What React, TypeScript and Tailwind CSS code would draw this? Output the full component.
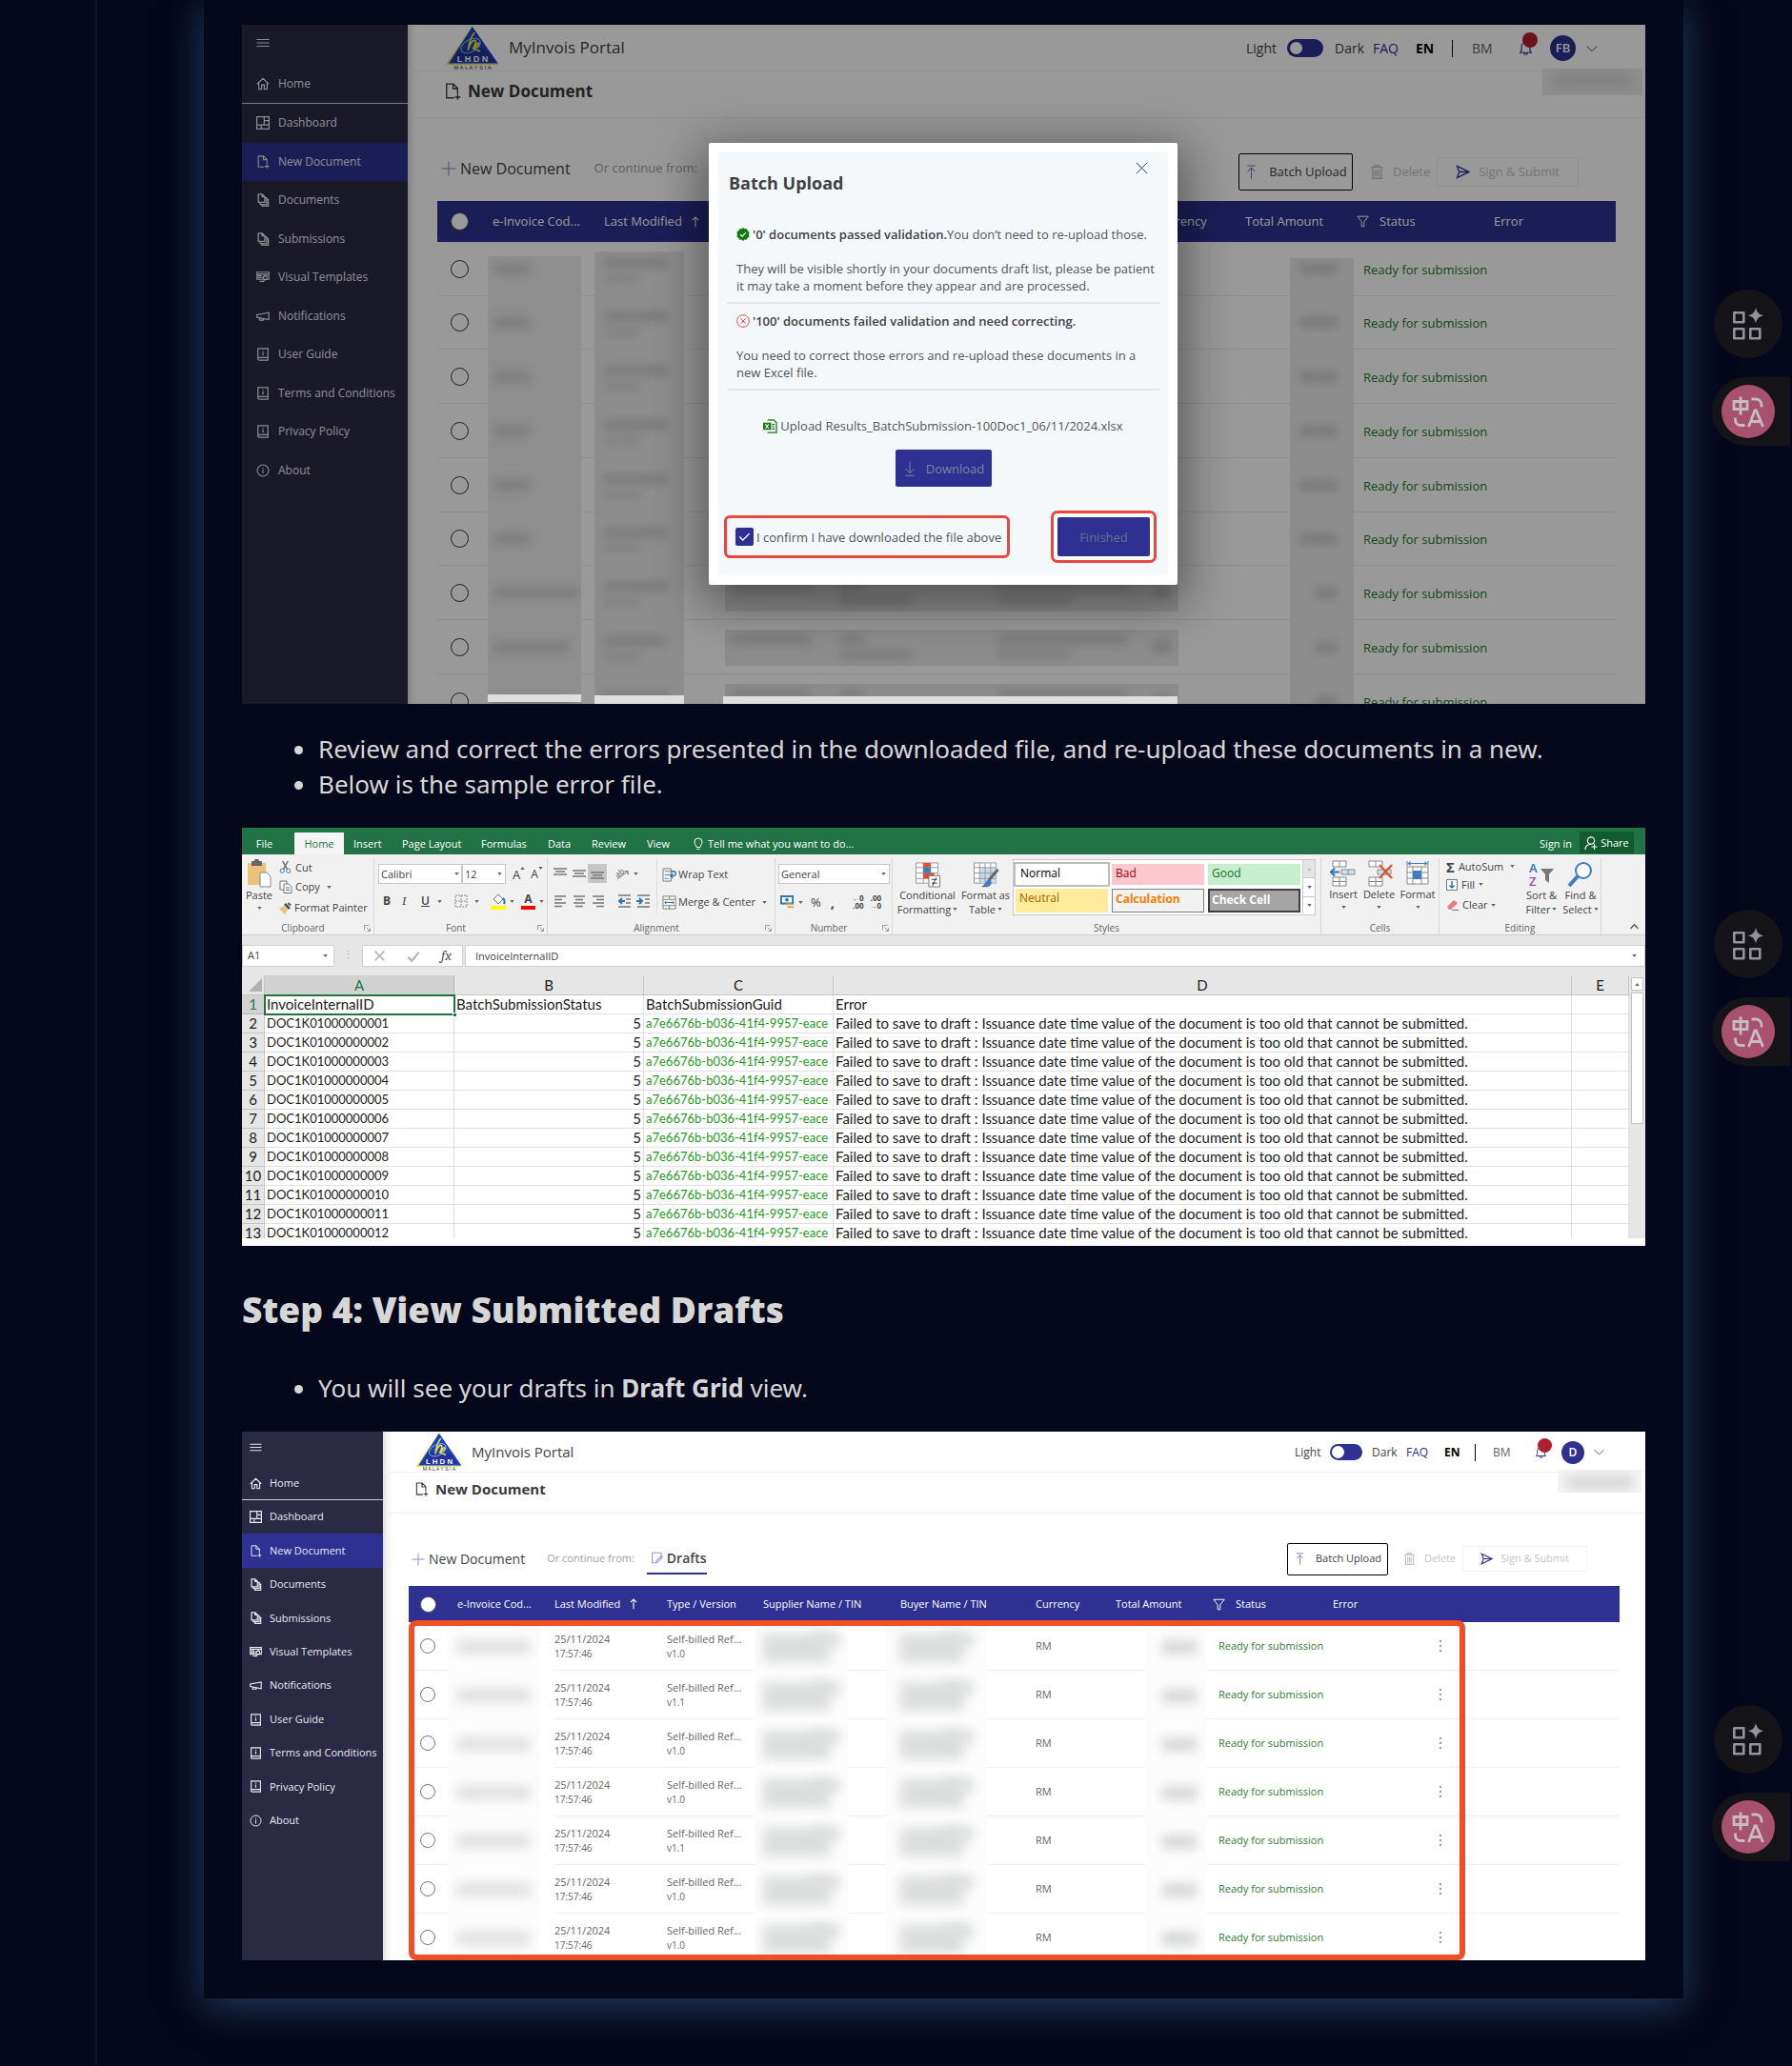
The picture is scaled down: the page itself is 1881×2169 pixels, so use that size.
import React from "react";

type P = { className?: string };

/* ---------- shared line icons ---------- */

function Ico({ className, children, w = 1.2 }: P & { children: React.ReactNode; w?: number }) {
  return (
    <svg viewBox="0 0 16 16" fill="none" stroke="currentColor" strokeWidth={w} className={className} aria-hidden="true">
      {children}
    </svg>
  );
}

const MenuIcon = ({ className }: P) => <Ico className={className}><path d="M0.5 4h15M0.5 8h15M0.5 12h15" /></Ico>;
const HomeIcon = ({ className }: P) => <Ico className={className} w={1.4}><path d="M1 8.3 8 1.6l7 6.7M3 7v7.5h3.4V9.4h3.2v5.1H13V7" /></Ico>;
const DashIcon = ({ className }: P) => <Ico className={className} w={1.4}><path d="M.7.7h14.6v14.6H.7zM9.5.7v9.6M.7 10.3h14.6M9.5 5.3h5.8M6 10.3v5" /></Ico>;
const NewDocIcon = ({ className }: P) => <Ico className={className}><path d="M9.5 14H2.5V1h6.2l4 4v5.5M8.5 1v4.3h4.2M12.8 10.8v5M10.3 13.3h5" /></Ico>;
const DocsIcon = ({ className }: P) => (
  <Ico className={className} w={1.5}><path d="M2.5 1h4.700l3 3v6.800H2.500zM7 1v3.200h3.200M4.800 11v2.200h7.600V5.400h-1.800M7 13.400v2h7.400V7.600h-1.800" /></Ico>
);
const VisualIcon = ({ className }: P) => (
  <Ico className={className} w={1.3}>
    <path d="M.8 2h14.4v8.6H.8zM.8 4.4h14.4M2.6 6.2h3v2.6h-3zM7 8.6l5.5-3M4 13h5" />
    <circle cx="10.8" cy="8.6" r="2.4" /><path d="M8 14l2-3" />
  </Ico>
);
const NotifIcon = ({ className }: P) => <Ico className={className} w={1.4}><path d="M.8 6.2v3.2L15 12V3.6zM4 10v2.6h4.4v-1.8" /></Ico>;
const GuideIcon = ({ className }: P) => <Ico className={className} w={1.4}><path d="M2 1h12v14H3.6A1.6 1.6 0 0 1 2 13.4zM2 13.2c0-.8.7-1.3 1.5-1.3H14M8 3.2v1.2M8 5.4v4" /></Ico>;
const AboutIcon = ({ className }: P) => <Ico className={className}><circle cx="8" cy="8" r="6.8" /><path d="M8 4.2v1.4M8 6.8v5" /></Ico>;
const PlusIcon = ({ className }: P) => <Ico className={className} w={1}><path d="M8 .5v15M.5 8h15" /></Ico>;
const UploadIcon = ({ className }: P) => <Ico className={className} w={1.1}><path d="M3.5 1h9M8 15.5V3.4M4 7.4l4-4 4 4" /></Ico>;
const DownIcon = ({ className }: P) => <Ico className={className} w={1}><path d="M3.5 15.3h9M8 .5v12M3.6 8.2 8 12.6l4.4-4.4" /></Ico>;
const TrashIcon = ({ className }: P) => <Ico className={className} w={1.5}><path d="M1.5 2.8h13M5.5 2.6V.8h5v1.8M3 3v12.2h10V3M5.8 5.5v7.3M8 5.5v7.3M10.2 5.5v7.3" /></Ico>;
const SendIcon = ({ className }: P) => <Ico className={className} w={1.4}><path d="M1.5 1.5 14.8 8 1.5 14.5 4 8zM4 8h10" /></Ico>;
const FilterIcon = ({ className }: P) => <Ico className={className} w={1.2}><path d="M1 1.5h14L9.6 8.4v6.1H6.4V8.4z" /></Ico>;
const ArrowUpIcon = ({ className }: P) => <Ico className={className} w={1.4}><path d="M8 15V1.5M3.8 5.6 8 1.4l4.2 4.2" /></Ico>;
const ChevronIcon = ({ className }: P) => <Ico className={className} w={1.2}><path d="M.8 4.5 8 11.7l7.2-7.2" /></Ico>;
const BellIcon = ({ className }: P) => <Ico className={className} w={1.2}><path d="M1.8 13h12.4l-1.5-2.2V6.4a4.7 4.7 0 0 0-9.4 0v4.4zM6 13.2a2 2 0 0 0 4 0" /></Ico>;
const DraftIcon = ({ className }: P) => <Ico className={className} w={1.4}><path d="M13.5 6V1.5H2v13h4.5M7 14.5l.8-3 6.6-6 1 1.2-6 6.6z" /></Ico>;

function LhdnLogo({ className }: P) {
  return (
    <svg viewBox="0 0 58 46" className={className} role="img" aria-label="LHDN Malaysia">
      <path d="M28.5.5 1 41h55z" fill="#e9e537" />
      <path d="M28.8 1 4 39.6h51.8z" fill="#1b3fc8" />
      <path d="M16 24 8.5 37.500h43L43 25z" fill="#23329b" />
      <path d="M31 7c-3 4-6 12-6.600 19M25 23c2-6 5.500-9 7-7 1.400 2-1.500 6-2.500 9 2-4 6-9 6.500-6 .2 2-6 5-6 5l7 3" fill="none" stroke="#e9e537" strokeWidth="1.800" />
      <ellipse cx="27" cy="21" rx="11" ry="6.500" fill="none" stroke="#8fb3dc" strokeWidth="1" transform="rotate(-28 27 21)" />
      <text x="29" y="37.500" textAnchor="middle" fontSize="9" fontWeight="700" fill="#fff" fontFamily="Liberation Sans, sans-serif">L H D N</text>
      <text x="29" y="45.500" textAnchor="middle" fontSize="6" fill="#333" fontFamily="Liberation Sans, sans-serif">M A L A Y S I A</text>
    </svg>
  );
}

/* ---------- portal ---------- */

const navItems: [string, (p: P) => React.ReactElement][] = [
  ["Dashboard", DashIcon],
  ["New Document", NewDocIcon],
  ["Documents", DocsIcon],
  ["Submissions", DocsIcon],
  ["Visual Templates", VisualIcon],
  ["Notifications", NotifIcon],
  ["User Guide", GuideIcon],
  ["Terms and Conditions", GuideIcon],
  ["Privacy Policy", GuideIcon],
  ["About", AboutIcon],
];

const large = {
  frame: "h-[713px]",
  aside: "w-[174px] text-[12px]",
  menu: "h-[38px] pl-[15px]",
  home: "h-[45px] pt-[4px] pl-[15px] gap-[9px]",
  nav: "h-[405px]",
  item: "pl-[15px] gap-[9px]",
  icon: "size-[14px]",
  top: "h-[49px] pl-[39px] pr-[50px] text-[14px]",
  logo: "w-[58px] h-[46px]",
  brand: "ml-[9px] text-[17px]",
  light: "w-[43px]",
  toggle: "w-[38px] h-[19px] mr-[12px] p-[3px]",
  knob: "size-[13px]",
  dark: "w-[40px]",
  faq: "w-[45px]",
  en: "w-[38px]",
  bar: "w-[21px]",
  bm: "w-[49px]",
  bell: "w-[33px]",
  bellIcon: "size-[15px]",
  dot: "size-[16px] left-[4px] -top-[9px]",
  avatar: "size-[27px] text-[13px] mr-[11px]",
  chev: "size-[12px]",
  sub: "h-[49px] pl-[38px] pb-[6px] text-[17px] gap-[7px]",
  subIcon: "size-[18px]",
  redactTop: "right-[3px] top-[46px] w-[105px] h-[28px] bg-[#ededed]",
  bar2: "h-[87px] pt-[26px] pl-[35px] pr-[70px]",
  newDoc: "text-[16px] pb-[7px]",
  cont: "text-[13px] ml-[25px] pb-[7px]",
  plus: "size-[16px] mr-[4px]",
  batch: "w-[120px] h-[39px] gap-[11px] mr-[18px] text-[13px]",
  del: "gap-[9px] w-[70px] text-[13px]",
  sign: "w-[149px] h-[31px] gap-[9px] text-[13px]",
  tIcon: "size-[15px]",
  wrap: "mx-[31px]",
  head: "h-[43px] text-[13px]",
  radio: "size-[19px] ml-[14px]",
};

const small: typeof large = {
  frame: "h-[555px]",
  aside: "w-[148px] text-[11px]",
  menu: "h-[33px] pl-[8px]",
  home: "h-[39px] pt-[4px] pl-[8px] gap-[8px]",
  nav: "h-[354px]",
  item: "pl-[8px] gap-[8px]",
  icon: "size-[13px]",
  top: "h-[43px] pl-[33px] pr-[43px] text-[12px]",
  logo: "w-[52px] h-[40px]",
  brand: "ml-[8px] text-[15px]",
  light: "w-[37px]",
  toggle: "w-[34px] h-[17px] mr-[10px] p-[2px]",
  knob: "size-[13px]",
  dark: "w-[36px]",
  faq: "w-[40px]",
  en: "w-[32px]",
  bar: "w-[19px]",
  bm: "w-[44px]",
  bell: "w-[28px]",
  bellIcon: "size-[13px]",
  dot: "size-[15px] left-[3px] -top-[8px]",
  avatar: "size-[24px] text-[12px] mr-[10px]",
  chev: "size-[11px]",
  sub: "h-[43px] pl-[33px] pb-[7px] text-[15px] gap-[7px]",
  subIcon: "size-[15px]",
  redactTop: "right-[4px] top-[40px] w-[88px] h-[24px] bg-[#f4f4f4]",
  bar2: "h-[76px] pt-[19px] pl-[30px] pr-[61px]",
  newDoc: "text-[14px]",
  cont: "text-[11px] ml-[23px]",
  plus: "size-[14px] mr-[4px]",
  batch: "w-[106px] h-[34px] gap-[10px] mr-[16px] text-[11px]",
  del: "gap-[9px] w-[62px] text-[11px]",
  sign: "w-[131px] h-[27px] gap-[8px] text-[11px]",
  tIcon: "size-[13px]",
  wrap: "mx-[27px]",
  head: "h-[38px] text-[11px]",
  radio: "size-[17px] ml-[12px]",
};

function Portal({
  s,
  initials,
  drafts,
  children,
  table,
  label,
}: {
  s: typeof large;
  initials: string;
  drafts?: boolean;
  children?: React.ReactNode;
  table: React.ReactNode;
  label: string;
}) {
  return (
    <section aria-label={label} className={`relative flex overflow-hidden bg-white text-[#444] ${s.frame}`}>
      <aside className={`shrink-0 bg-[#2b2a44] text-[#e9e9f0] ${s.aside}`}>
        <div className={`flex items-center ${s.menu}`}>
          <button aria-label="Menu"><MenuIcon className={s.icon} /></button>
        </div>
        <a href="#home" className={`flex items-center border-b border-[#c9ccd8] ${s.home}`}>
          <HomeIcon className={s.icon} />Home
        </a>
        <nav className={`grid auto-rows-fr ${s.nav}`}>
          {navItems.map(([name, I]) => (
            <a key={name} href="#nav" className={`flex items-center whitespace-nowrap ${s.item} ${name === "New Document" ? "bg-[#2e3192]" : ""}`}>
              <I className={`shrink-0 ${s.icon}`} />{name}
            </a>
          ))}
        </nav>
      </aside>

      <div className="relative min-w-0 flex-1 shadow-[inset_10px_0_10px_-8px_rgba(0,0,0,0.18)]">
        <header className={`flex items-center border-b border-[#f0f0f0] ${s.top}`}>
          <LhdnLogo className={s.logo} />
          <span className={s.brand}>MyInvois Portal</span>
          <div className="ml-auto flex items-center whitespace-nowrap pt-px">
            <span className={s.light}>Light</span>
            <button role="switch" aria-checked="false" aria-label="Dark mode" className={`rounded-full bg-[#2e3192] ${s.toggle}`}>
              <span className={`block rounded-full bg-white ${s.knob}`} />
            </button>
            <span className={s.dark}>Dark</span>
            <a href="#faq" className={`text-[#2e3192] ${s.faq}`}>FAQ</a>
            <a href="#en" className={`font-bold text-black ${s.en}`}>EN</a>
            <span className={s.bar}><span className="block h-[18px] w-px bg-black" /></span>
            <a href="#bm" className={`text-[#666] ${s.bm}`}>BM</a>
            <button aria-label="Alerts" className={`relative block text-[#2e3192] ${s.bell}`}>
              <BellIcon className={s.bellIcon} />
              <span className={`absolute rounded-full bg-[#b01f2e] ${s.dot}`} />
            </button>
            <span className={`flex items-center justify-center rounded-full bg-[#2e3192] font-semibold text-white ${s.avatar}`}>{initials}</span>
            <ChevronIcon className={s.chev} />
          </div>
        </header>
        <div className={`flex items-center border-b border-[#efefef] font-bold text-[#3a3a3a] ${s.sub}`}>
          <NewDocIcon className={s.subIcon} />New Document
        </div>
        <div className={`absolute overflow-hidden ${s.redactTop}`}>
          <div className="mx-[10px] mt-[6px] h-[14px] bg-[#d6d6d6] blur-[6px]" />
        </div>

        <div className={`flex items-center whitespace-nowrap ${s.bar2}`}>
          <button className={`flex items-center ${s.newDoc}`}>
            <PlusIcon className={`text-[#7f82cc] ${s.plus}`} />New Document
          </button>
          <span className={`text-[#a0a0a0] ${s.cont}`}>Or continue from:</span>
          {drafts && (
            <button className="ml-[13px] flex h-[32px] items-center gap-[4px] border-b-2 border-[#2e3192] pl-[4px] text-[14px] font-semibold">
              <DraftIcon className="size-[13px] text-[#9a9cd8]" />Drafts
            </button>
          )}
          <button className={`ml-auto flex items-center justify-center rounded-[2px] border border-black ${s.batch}`}>
            <UploadIcon className={`text-[#7477b8] ${s.tIcon}`} />Batch Upload
          </button>
          <button className={`flex items-center text-[#c4c4c4] ${s.del}`}>
            <TrashIcon className={s.tIcon} />Delete
          </button>
          <button className={`flex items-center justify-center border border-[#f1f1f1] text-[#c4c4c4] ${s.sign}`}>
            <SendIcon className={`text-[#2e3192] ${s.tIcon}`} />Sign &amp; Submit
          </button>
        </div>
        <div className={s.wrap}>{table}</div>
      </div>
      {children}
    </section>
  );
}

function HeadRow({ s, trail }: { s: typeof large; trail?: boolean }) {
  return (
    <thead>
      <tr className={`bg-[#2e3192] text-left text-white ${s.head}`}>
        <th><input type="radio" aria-label="Select all" className={`block appearance-none rounded-full border border-[#555] bg-white ${s.radio}`} /></th>
        <th className="font-normal">e-Invoice Cod...</th>
        <th className="font-normal"><span className="flex items-center gap-[8px]">Last Modified <ArrowUpIcon className="size-[12px]" /></span></th>
        <th className="font-normal">Type / Version</th>
        <th className="font-normal">Supplier Name / TIN</th>
        <th className="font-normal">Buyer Name / TIN</th>
        <th className="font-normal">Currency</th>
        <th className="font-normal">Total Amount</th>
        <th className="font-normal"><span className="flex items-center gap-[11px]"><FilterIcon className="size-[13px]" />Status</span></th>
        <th className="font-normal">Error</th>
        {trail && <th aria-label="Actions" />}
      </tr>
    </thead>
  );
}

const bigRows = ["h-[57px]", "h-[56px]", "h-[57px]", "h-[57px]", "h-[57px]", "h-[56px]", "h-[57px]", "h-[57px]", "h-[57px]"];

function BatchTable() {
  const line = "border-b border-[#ececec]";
  return (
    <table className="w-full table-fixed border-separate border-spacing-0 whitespace-nowrap">
      <colgroup>
        <col className="w-[58px]" /><col className="w-[117px]" /><col className="w-[131px]" /><col className="w-[115px]" />
        <col className="w-[167px]" /><col className="w-[165px]" /><col className="w-[95px]" /><col className="w-[117px]" />
        <col className="w-[144px]" /><col />
      </colgroup>
      <HeadRow s={large} />
      <tbody>
        {bigRows.map((h, i) => (
          <tr key={i} className={h}>
            <td className={line}><input type="radio" name="batch" aria-label={`Select row ${i + 1}`} className="ml-[14px] block size-[19px] appearance-none rounded-full border border-[#333]" /></td>
            <td className={`relative ${line}`}>
              <div className={`absolute -bottom-px -left-[5px] w-[98px] overflow-hidden bg-[#eeeeee] ${i ? "top-0" : "top-[15px]"}`}>
                <div className={`absolute bottom-[22px] left-[6px] h-[13px] bg-[#d2d2d2] blur-[5px] ${i > 6 ? "w-[80px]" : i > 5 ? "w-[90px]" : "w-[38px]"}`} />
              </div>
            </td>
            <td className={`relative ${line}`}>
              <div className={`absolute -bottom-px -left-[10px] w-[94px] overflow-hidden bg-[#ececec] ${i ? "top-0" : "top-[10px]"}`}>
                <div className="absolute bottom-[29px] left-[9px] h-[12px] w-[68px] bg-[#d0d0d0] blur-[5px]" />
                <div className="absolute bottom-[14px] left-[9px] h-[9px] w-[40px] bg-[#d6d6d6] blur-[5px]" />
              </div>
            </td>
            <td className={`relative ${line}`}>
              {i > 5 && (
                <div className="absolute -left-[4px] top-[10px] z-10 h-[38px] w-[476px] overflow-hidden bg-[#eaeaea]">
                  <div className="absolute left-[6px] top-[5px] h-[11px] w-[84px] bg-[#d0d0d0] blur-[5px]" />
                  <div className="absolute left-[120px] top-[5px] h-[10px] w-[26px] bg-[#d0d0d0] blur-[5px]" />
                  <div className="absolute left-[120px] top-[21px] h-[11px] w-[76px] bg-[#d2d2d2] blur-[5px]" />
                  <div className="absolute left-[286px] top-[5px] h-[11px] w-[136px] bg-[#d0d0d0] blur-[5px]" />
                  <div className="absolute left-[286px] top-[21px] h-[10px] w-[76px] bg-[#d2d2d2] blur-[5px]" />
                  <div className="absolute left-[450px] top-[12px] h-[12px] w-[18px] bg-[#c8c8c8] blur-[5px]" />
                </div>
              )}
            </td>
            <td className={line} /><td className={line} /><td className={line} />
            <td className={`relative ${line}`}>
              <div className={`absolute -bottom-px left-[47px] w-[67px] overflow-hidden bg-[#ececec] ${i ? "top-0" : "top-[17px]"}`}>
                <div className={`absolute bottom-[22px] h-[13px] bg-[#cdcdcd] blur-[5px] ${i > 5 ? "left-[26px] w-[24px]" : "left-[10px] w-[40px]"}`} />
              </div>
            </td>
            <td className={`pl-[7px] pt-[3px] text-[13px] text-[#1f7a2a] ${line}`}>Ready for submission</td>
            <td className={line} />
          </tr>
        ))}
      </tbody>
    </table>
  );
}

function DraftsTable() {
  const versions = ["v1.0", "v1.1", "v1.0", "v1.0", "v1.1", "v1.0", "v1.0"];
  const line = "border-b border-[#f0f0f0]";
  return (
    <div className="relative">
      <table className="w-full table-fixed border-separate border-spacing-0 whitespace-nowrap text-[11px] text-[#666]">
        <colgroup>
          <col className="w-[51px]" /><col className="w-[102px]" /><col className="w-[118px]" /><col className="w-[101px]" />
          <col className="w-[144px]" /><col className="w-[142px]" /><col className="w-[84px]" /><col className="w-[102px]" />
          <col className="w-[126px]" /><col className="w-[111px]" /><col />
        </colgroup>
        <HeadRow s={small} trail />
        <tbody>
          {versions.map((v, i) => (
            <tr key={i} className="h-[51px]">
              <td className={line}><input type="radio" name="draft" aria-label={`Select draft ${i + 1}`} className="ml-[12px] block size-[16px] appearance-none rounded-full border border-[#777]" /></td>
              <td className="relative"><div className="absolute inset-y-0 -left-[10px] w-[97px] overflow-hidden bg-[#fcfcfc]"><div className="absolute left-[10px] top-[19px] h-[14px] w-[76px] bg-[#dfdfdf] blur-[6px]" /></div></td>
              <td className={line}><div className="leading-[16px]">25/11/2024</div><div className="text-[10px] leading-[14px]">17:57:46</div></td>
              <td className={line}><div className="leading-[16px]">Self-billed Ref...</div><div className="text-[10px] leading-[14px]">{v}</div></td>
              <td className={`relative ${line}`}>
                <div className="absolute -bottom-px -left-[9px] top-0 w-[98px] overflow-hidden bg-[#fbfcfb]">
                  <div className="absolute left-[9px] top-[12px] h-[30px] w-[70px] bg-[#dcdedd] blur-[6px]" />
                  <div className="absolute left-[60px] top-[12px] h-[13px] w-[30px] bg-[#dcdedd] blur-[6px]" />
                </div>
              </td>
              <td className={`relative ${line}`}>
                <div className="absolute -bottom-px -left-[15px] top-0 w-[106px] overflow-hidden bg-[#fbfcfb]">
                  <div className="absolute left-[15px] top-[12px] h-[30px] w-[66px] bg-[#dcdedd] blur-[6px]" />
                  <div className="absolute left-[60px] top-[12px] h-[13px] w-[32px] bg-[#dcdedd] blur-[6px]" />
                </div>
              </td>
              <td className={line}>RM</td>
              <td className={`relative ${line}`}>
                <div className="absolute -bottom-px left-[31px] top-0 w-[64px] overflow-hidden bg-[#fbfcfb]">
                  <div className="absolute left-[18px] top-[20px] h-[13px] w-[36px] bg-[#d2d4d3] blur-[6px]" />
                </div>
              </td>
              <td className={`pl-[6px] text-[#2f7d32] ${line}`}><span className="block w-[110px] overflow-hidden">Ready for submission</span></td>
              <td className={line} />
              <td className={line}>
                <button aria-label="More" className="block text-[#777]">
                  <svg viewBox="0 0 4 14" className="h-[14px] w-[4px]" fill="currentColor"><circle cx="2" cy="2" r="1" /><circle cx="2" cy="7" r="1" /><circle cx="2" cy="12" r="1" /></svg>
                </button>
              </td>
            </tr>
          ))}
        </tbody>
      </table>
      <div className="pointer-events-none absolute left-0 top-[36px] h-[357px] w-[1109px] rounded-[8px] border-[6px] border-[#f04e23]" />
    </div>
  );
}

function BatchDialog() {
  return (
    <div role="dialog" aria-label="Batch Upload" className="absolute left-[490px] top-[124px] w-[492px] rounded-[2px] bg-white p-[10px] text-[13px] leading-[18px] text-[#555] shadow-[0_12px_50px_10px_rgba(0,0,0,0.4)]">
      <div className="flex h-[444px] flex-col whitespace-nowrap bg-[#f4f8fb] px-[9px]">
        <div className="flex h-[66px] justify-between pl-[2px] pr-[12px]">
          <h3 className="pt-[20px] text-[18px] font-bold leading-[24px] text-[#3f4145]">Batch Upload</h3>
          <button aria-label="Close" className="self-start pt-[10px] text-[#2e3192]">
            <Ico className="size-[13px]"><path d="M1 1l14 14M15 1 1 15" /></Ico>
          </button>
        </div>
        <div className="h-[93px] border-b-2 border-[#e3e7ea] pl-[10px] pt-[11px]">
          <p className="flex items-center">
            <svg viewBox="0 0 16 16" className="mr-[3px] size-[14px]"><path d="M8 0l2 1.500 2.500-.2.900 2.300 2 1.400L15 8l.4 2.800-2.200 1.400-1 2.300-2.600-.2L8 16l-2-1.600-2.500.2-1-2.400L.5 10.800 1 8 .5 5l2.100-1.400 1-2.300L6 1.500z" fill="#107c10" /><path d="M4.600 8.200 7 10.500l4.300-4.600" fill="none" stroke="#fff" strokeWidth="1.500" /></svg>
            <b className="font-semibold text-[#3f4145]">'0' documents passed validation.</b>You don’t need to re-upload those.
          </p>
          <p className="mt-[18px]">They will be visible shortly in your documents draft list, please be patient<br />it may take a moment before they appear and are processed.</p>
        </div>
        <div className="h-[91px] border-b-2 border-[#e3e7ea] pl-[10px] pt-[9px]">
          <p className="flex items-center">
            <svg viewBox="0 0 16 16" className="mr-[3px] size-[14px]" fill="none" stroke="#e0323a"><circle cx="8" cy="8" r="7.300" /><path d="M5 5l6 6M11 5l-6 6" /></svg>
            <b className="font-semibold text-[#3f4145]">'100' documents failed validation and need correcting.</b>
          </p>
          <p className="mt-[18px]">You need to correct those errors and re-upload these documents in a<br />new Excel file.</p>
        </div>
        <p className="mt-[28px] flex items-center justify-center gap-[3px]">
          <svg viewBox="0 0 16 16" className="size-[15px]"><path d="M5 1h7l3 3v11H5" fill="none" stroke="#107c10" strokeWidth="1.300" /><path d="M0 4h9v8H0z" fill="#107c10" /><path d="M2.600 5.800l3.600 4.600M6.200 5.800l-3.600 4.600" stroke="#fff" strokeWidth="1.200" /><path d="M10 6h3M10 8.500h3M10 11h3" stroke="#107c10" strokeWidth="1.200" /></svg>
          Upload Results_BatchSubmission-100Doc1_06/11/2024.xlsx
        </p>
        <button className="mt-[16px] flex h-[39px] w-[101px] items-center justify-center gap-[9px] self-center rounded-[2px] bg-[#2e3192] text-[#82849c]">
          <DownIcon className="size-[16px]" />Download
        </button>
        <div className="-ml-[3px] mt-[25px] flex items-center justify-between pr-[3px]">
          <label className="flex h-[45px] w-[300px] items-center gap-[3px] rounded-[6px] border-[3px] border-[#e8473f] pl-[9px]">
            <span className="relative block size-[19px] shrink-0">
              <input type="checkbox" defaultChecked className="block size-[19px] appearance-none rounded-[2px] bg-[#2e3192]" />
              <Ico className="pointer-events-none absolute left-[2px] top-[2px] size-[15px] text-white" w={1.5}><path d="M2.500 8 6.200 11.700 13.500 4.400" /></Ico>
            </span>
            I confirm I have downloaded the file above
          </label>
          <span className="block rounded-[7px] border-[3px] border-[#e8473f] bg-white p-[4px]">
            <button className="block h-[41px] w-[97px] rounded-[2px] bg-[#2e3192] text-[#6c6e92]">Finished</button>
          </span>
        </div>
      </div>
    </div>
  );
}

/* ---------- spreadsheet ---------- */

const Caret = ({ className = "" }: P) => (
  <svg viewBox="0 0 6 4" className={`h-[3px] w-[5px] shrink-0 ${className}`} fill="#666"><path d="M0 0h6L3 4z" /></svg>
);
const Lines = ({ className = "", d }: P & { d: string }) => (
  <svg viewBox="0 0 14 14" className={`h-[14px] w-[14px] shrink-0 ${className}`} stroke="#777" strokeWidth="1.300" fill="none"><path d={d} /></svg>
);
const IndentIcon = ({ className = "", d }: P & { d: string }) => (
  <svg viewBox="0 0 15 14" className={`h-[14px] w-[15px] shrink-0 ${className}`} stroke="#777" strokeWidth="1.300" fill="none">
    <path d="M1 1h13M9 5h5M9 9h5M1 13h13" /><path d={d} stroke="#2f75b5" strokeWidth="2" />
  </svg>
);
const Launcher = () => (
  <svg viewBox="0 0 8 8" className="size-[7px]" fill="none" stroke="#888"><path d="M.5 6V.5H6M3 3l4 4M7.500 4v3.500H4" /></svg>
);

function Group({ w, label, children, launch }: { w: string; label: string; children: React.ReactNode; launch?: boolean }) {
  return (
    <div className={`flex shrink-0 flex-col border-r border-[#d8d8d8] ${w}`}>
      <div className="h-[66px]">{children}</div>
      <div className="flex h-[14px] items-center text-[10px] leading-[14px] text-[#666]">
        <span className="flex-1 text-center">{label}</span>
        {launch && <span className="pr-[3px]"><Launcher /></span>}
      </div>
    </div>
  );
}

function CellsIcon({ kind }: { kind: "insert" | "delete" | "format" }) {
  return (
    <svg viewBox="0 0 28 28" className="size-[28px]" fill="#fff" stroke="#888">
      {kind === "format" ? (
        <>
          <path d="M3 7h22v18H3zM3 13h22M3 19h22M9 7v18M18 7v18" /><path d="M9 11h9v9H9z" fill="#3f7dc0" stroke="none" />
          <path d="M3 1v5M25 1v5M4 3.500h20M7 1.500 4 3.500l3 2M21 1.500l3 2-3 2" stroke="#3f7dc0" fill="none" />
        </>
      ) : (
        <>
          <path d="M3 1h14v6H3zM10 1v6M3 18h14v9H3zM3 22.500h14M10 18v9" />
          <path d="M12 10h14v5H12zM19 10v5" fill="#cfe0f2" />
          {kind === "insert" ? <path d="M10 12.500H1M5 8.500l-4 4 4 4" stroke="#2f75b5" strokeWidth="2.200" fill="none" /> : <path d="M14 5l13 14M27 5 14 19" stroke="#d9532c" strokeWidth="2.200" fill="none" />}
        </>
      )}
    </svg>
  );
}

function Ribbon() {
  const tabs: [string, string][] = [["Insert", "w-[51px]"], ["Page Layout", "w-[83px]"], ["Formulas", "w-[70px]"], ["Data", "w-[46px]"], ["Review", "w-[58px]"], ["View", "w-[49px]"]];
  return (
    <>
      <div className="flex h-[28px] items-end whitespace-nowrap bg-[#217346] text-[11px] leading-[23px] text-white">
        <button className="w-[55px] pr-[8px] text-center">File</button>
        <button className="mr-[10px] h-[23px] w-[52px] bg-[#f5f5f5] text-[#217346]">Home</button>
        {tabs.map(([t, w]) => <button key={t} className={`text-left ${w}`}>{t}</button>)}
        <svg viewBox="0 0 10 14" className="mb-[4px] h-[14px] w-[10px]" fill="none" stroke="#fff"><path d="M3 10.500C3 8.500 1 7.500 1 5a4 4 0 0 1 8 0c0 2.500-2 3.500-2 5.500zM3.500 12.500h3" /></svg>
        <span className="ml-[5px]">Tell me what you want to do...</span>
        <button className="ml-auto mr-[8px]">Sign in</button>
        <button className="mb-px mr-[12px] flex h-[23px] w-[57px] items-center justify-center gap-[3px] bg-[#105c2f]">
          <svg viewBox="0 0 14 14" className="size-[14px]" fill="none" stroke="#fff" strokeWidth="1.200"><circle cx="7" cy="4.500" r="3.700" /><path d="M1 14c0-4 3-5.500 6-5.500M10.500 8v6M7.500 11h6" /></svg>Share
        </button>
      </div>

      <div className="flex h-[85px] overflow-hidden whitespace-nowrap border-b border-[#d0d0d0] bg-[#f1f1f1] pt-[4px] text-[11px] leading-[16px] text-[#444]">
        <Group w="w-[139px]" label="Clipboard" launch>
          <div className="flex">
            <button className="flex w-[36px] flex-col items-center pt-px">
              <svg viewBox="0 0 26 30" className="h-[30px] w-[26px]"><path d="M1 4h19v23H1z" fill="#ecc278" /><path d="M5 2h3a2.500 2.500 0 0 1 5 0h3v5H5z" fill="#666" /><path d="M14 14h7l4 4v11H14z" fill="#fff" stroke="#888" /></svg>
              Paste<Caret className="mt-[4px]" />
            </button>
            <div className="pl-[3px]">
              <button className="flex h-[19px] items-center gap-[4px]"><svg viewBox="0 0 14 14" className="size-[13px]" fill="none"><path d="M4 0l5 9M10 0 5 9" stroke="#666" strokeWidth="1.500" /><circle cx="3.500" cy="11" r="2.300" stroke="#2f75b5" /><circle cx="10.500" cy="11" r="2.300" stroke="#2f75b5" /></svg>Cut</button>
              <button className="flex h-[22px] items-center gap-[3px]"><svg viewBox="0 0 14 14" className="size-[14px]" fill="#fff" stroke="#777"><path d="M1 1h7v9H1z" /><path d="M5 4h5l3 3v6.500H5z" /><path d="M7 8h4M7 10.500h4" stroke="#2f75b5" /></svg>Copy<Caret className="ml-[4px]" /></button>
              <button className="flex h-[21px] items-center gap-[2px]"><svg viewBox="0 0 14 14" className="size-[14px]"><path d="M0 8l5-3 4 4-3 5z" fill="#ecc278" /><path d="M5 4l2-2 5 5-2 2zM10 1l3 3-2 1-2-2z" fill="#555" /></svg>Format Painter</button>
            </div>
          </div>
        </Group>
        <Group w="w-[182px]" label="Font" launch>
          <div className="flex items-center pl-[4px] pt-[6px]">
            <select aria-label="Font" className="h-[21px] w-[88px] appearance-none border border-[#c8c8c8] bg-white pl-[2px]"><option>Calibri</option></select>
            <Caret className="relative -ml-[8px] mr-[3px]" />
            <select aria-label="Font size" className="h-[21px] w-[46px] appearance-none border border-[#c8c8c8] bg-white pl-[2px]"><option>12</option></select>
            <Caret className="relative -ml-[9px] mr-[11px]" />
            <button aria-label="Increase font size" className="mr-[6px] flex text-[13px]">A<Caret className="rotate-180" /></button>
            <button aria-label="Decrease font size" className="flex text-[12px]">A<Caret /></button>
          </div>
          <div className="flex items-center pl-[9px] pt-[9px]">
            <button className="w-[20px] text-left text-[12px] font-bold">B</button>
            <button className="w-[20px] text-left font-serif text-[13px] italic">I</button>
            <button className="w-[17px] text-left text-[12px] font-semibold underline">U</button><Caret className="mr-[13px]" />
            <svg viewBox="0 0 14 14" className="mr-[7px] size-[14px]" fill="none" stroke="#888" strokeDasharray="2 1"><path d="M1 1h12v12H1zM7 1v12M1 7h12" /></svg><Caret className="mr-[12px]" />
            <svg viewBox="0 0 16 18" className="mr-[4px] h-[18px] w-[16px]"><path d="M3 7l5-5 5 5-5 5z" fill="#fff" stroke="#777" /><path d="M13 6c2 2 2 4 1 6" stroke="#2f75b5" strokeWidth="2" fill="none" /><path d="M0 14h16v4H0z" fill="#ff0" /></svg><Caret className="mr-[7px]" />
            <span className="mr-[4px] block w-[15px] border-b-4 border-[#f00] text-center text-[12px] font-bold leading-[14px]">A</span><Caret />
          </div>
        </Group>
        <Group w="w-[239px]" label="Alignment" launch>
          <div className="flex">
            <div className="w-[114px]">
              <div className="flex items-center pl-[6px] pt-[6px]">
                <Lines d="M0 2h14M2 5h10M0 8h14" className="mr-[6px]" /><Lines d="M0 4h14M2 7h10M0 10h14" className="mr-[2px]" />
                <span className="mr-[9px] flex h-[20px] w-[20px] items-center justify-center bg-[#c6c6c6]"><Lines d="M0 6h14M2 9h10M0 12h14" /></span>
                <svg viewBox="0 0 16 16" className="mr-[4px] size-[15px]" fill="none" stroke="#666"><path d="M2 14 14 5M10 5h4v4" /><text x="0" y="10" fontSize="9" fill="#555" stroke="none" transform="rotate(-35 5 8)">ab</text></svg><Caret />
              </div>
              <div className="flex items-center pl-[6px] pt-[12px]">
                <Lines d="M1 2h12M1 5.500h8M1 9h12M1 12.500h8" className="mr-[6px]" /><Lines d="M1 2h12M3 5.500h8M1 9h12M3 12.500h8" className="mr-[6px]" /><Lines d="M1 2h12M5 5.500h8M1 9h12M5 12.500h8" className="mr-[13px]" />
                <IndentIcon d="M8 7H2M5 4 2 7l3 3" className="mr-[5px]" />
                <IndentIcon d="M0 7h6M3 4l3 3-3 3" />
              </div>
            </div>
            <div className="border-l border-[#dcdcdc] pl-[5px]">
              <button className="flex h-[34px] items-center gap-[2px]"><svg viewBox="0 0 16 16" className="size-[15px]" fill="none" stroke="#777"><path d="M1 1h9v14H1zM3 4h9M3 8h6M3 12h4" /><path d="M10 4h3c3 0 3 5 0 5h-3M12 6.500 9.500 9l2.500 2.500" stroke="#2f75b5" strokeWidth="1.500" /></svg>Wrap Text</button>
              <button className="flex h-[24px] items-center gap-[2px]"><svg viewBox="0 0 16 16" className="size-[15px]" fill="#fff" stroke="#777"><path d="M1 1h14v14H1zM1 4.500h14M1 11.500h14M8 1v3.500M8 11.500V15" /><path d="M3 8h10M5 6 3 8l2 2M11 6l2 2-2 2" stroke="#2f75b5" fill="none" /></svg>Merge &amp; Center<Caret className="ml-[5px]" /></button>
            </div>
          </div>
        </Group>
        <Group w="w-[123px]" label="Number" launch>
          <div className="flex items-center pl-[3px] pt-[6px]">
            <select aria-label="Number format" className="h-[21px] w-[117px] appearance-none border border-[#c8c8c8] bg-white pl-[2px]"><option>General</option></select>
            <Caret className="relative -ml-[9px]" />
          </div>
          <div className="flex items-center pl-[5px] pt-[11px]">
            <svg viewBox="0 0 16 16" className="mr-[4px] size-[15px]"><path d="M1 1h13v8H1z" fill="#fff" stroke="#2f75b5" strokeWidth="2" /><circle cx="7.500" cy="5" r="2" fill="#2f75b5" /><path d="M6 9h7v2H6zM8 12h7v2H8z" fill="#e3a84a" /></svg><Caret className="mr-[8px]" />
            <span className="mr-[10px] text-[13px]">%</span><b className="mr-[18px] text-[15px]">,</b>
            <span className="mr-[6px] text-right text-[8px] font-bold leading-[8px]"><span className="text-[#2f75b5]">←</span>0<br />.00</span>
            <span className="text-right text-[8px] font-bold leading-[8px]">.00<br /><span className="text-[#2f75b5]">→</span>0</span>
          </div>
        </Group>
        <Group w="w-[450px]" label="Styles">
          <div className="flex">
            <button className="flex w-[69px] flex-col items-center pl-[4px] pt-[4px] leading-[15px]">
              <svg viewBox="0 0 28 28" className="h-[27px] w-[28px]" fill="#fff" stroke="#999"><path d="M1 1h24v22H1zM1 6h24M1 12h24M1 18h24M9 1v22M17 1v22" /><path d="M9 1h8v5H9zM9 12h12v6H9z" fill="#d9532c" stroke="none" /><path d="M9 6h8v6H9z" fill="#3f7dc0" stroke="none" /><path d="M15 15h12v12H15z" stroke="#777" /><path d="M18 19h6M18 23h6M23 17l-4 9" stroke="#333" /></svg>
              Conditional<span className="flex items-center gap-[2px]">Formatting<Caret /></span>
            </button>
            <button className="flex w-[57px] flex-col items-center pt-[4px] leading-[15px]">
              <svg viewBox="0 0 28 28" className="h-[27px] w-[28px]" fill="#fff" stroke="#999"><path d="M1 1h24v22H1z" /><path d="M7 6h18v17H7z" fill="#c5d9ef" stroke="none" /><path d="M1 6h24M1 12h24M1 18h24M7 1v22M13 1v22M19 1v22" fill="none" /><path d="M27 8 17 20" stroke="#666" strokeWidth="3" /><path d="M18 19c-4 0-4 5-9 8 5 1 11 0 11-5z" fill="#3f7dc0" stroke="none" /></svg>
              Format as<span className="flex items-center gap-[2px]">Table<Caret /></span>
            </button>
            <div className="mt-px flex h-[59px] border border-[#c8c8c8] bg-white text-[12px]">
              <div className="grid w-[303px] grid-cols-3 gap-x-[4px] gap-y-[4px] p-[2px] pt-[4px] leading-[19px]">
                <span className="-m-[2px] border-2 border-[#bdbdbd] pl-[5px] text-black">Normal</span>
                <span className="bg-[#ffc7ce] pl-[4px] text-[#9c0006]">Bad</span>
                <span className="bg-[#c6efce] pl-[4px] text-[#1f6f2b]">Good</span>
                <span className="bg-[#ffeb9c] pl-[4px] text-[#9c6500]">Neutral</span>
                <span className="border border-[#7f7f7f] bg-[#f2f2f2] pl-[3px] font-bold text-[#fa7d00]">Calculation</span>
                <span className="border-2 border-[#3f3f3f] bg-[#a5a5a5] pl-[2px] font-bold text-white">Check Cell</span>
              </div>
              <div className="flex w-[13px] flex-col border-l border-[#c8c8c8]">
                <button aria-label="Previous styles" className="flex flex-1 items-center justify-center bg-[#e4e4e4]"><Caret className="rotate-180 opacity-30" /></button>
                <button aria-label="Next styles" className="flex flex-1 items-center justify-center border-y border-[#c8c8c8]"><Caret /></button>
                <button aria-label="More styles" className="flex flex-1 items-center justify-center"><Caret /></button>
              </div>
            </div>
          </div>
        </Group>
        <Group w="w-[124px]" label="Cells">
          <div className="flex pl-[6px]">
            {([["Insert", "insert", "w-[34px]"], ["Delete", "delete", "w-[41px]"], ["Format", "format", "w-[40px]"]] as const).map(([t, k, w]) => (
              <button key={t} className={`flex flex-col items-center pt-[2px] ${w}`}><CellsIcon kind={k} />{t}<Caret className="mt-[4px]" /></button>
            ))}
          </div>
        </Group>
        <Group w="w-[170px]" label="Editing">
          <div className="flex pl-[7px]">
            <div className="w-[80px]">
              <button className="flex h-[17px] items-center gap-[4px]"><b className="text-[15px]">Σ</b>AutoSum<Caret className="ml-[3px]" /></button>
              <button className="flex h-[21px] items-center gap-[4px]"><svg viewBox="0 0 12 12" className="size-[12px]" fill="#fff" stroke="#777"><path d="M.5.5h11v11H.5z" /><path d="M6 2v7M3.500 6.500 6 9l2.500-2.500" stroke="#2f75b5" strokeWidth="1.500" fill="none" /></svg>Fill<Caret /></button>
              <button className="flex h-[22px] items-center gap-[3px]"><svg viewBox="0 0 14 12" className="h-[12px] w-[14px]"><path d="M1 8 8 1l4 3-7 7H3z" fill="#e8788a" /><path d="M6 11.500h7" stroke="#777" /></svg>Clear<Caret /></button>
            </div>
            <button className="flex w-[40px] flex-col items-center pt-[3px] leading-[15px]">
              <svg viewBox="0 0 28 28" className="size-[28px]"><text x="1" y="12" fontSize="13" fontWeight="600" fill="#2f75b5">A</text><text x="1" y="26" fontSize="13" fontWeight="600" fill="#8a4fb5">Z</text><path d="M13 8h14l-5 6v9l-4-3v-6z" fill="#777" /></svg>
              Sort &amp;<span className="flex items-center gap-[2px]">Filter<Caret /></span>
            </button>
            <button className="flex w-[42px] flex-col items-center pt-[3px] leading-[15px]">
              <svg viewBox="0 0 28 28" className="size-[28px]" fill="none" stroke="#3f7dc0"><circle cx="17" cy="10" r="8" strokeWidth="2" fill="#fff" /><path d="M11 16 2 26" strokeWidth="4" /></svg>
              Find &amp;<span className="flex items-center gap-[2px]">Select<Caret /></span>
            </button>
          </div>
        </Group>
        <button aria-label="Collapse ribbon" className="ml-auto mr-[7px] self-end pb-[4px] text-[#555]"><Ico className="size-[9px]" w={2.500}><path d="M1 12l7-7 7 7" /></Ico></button>
      </div>
    </>
  );
}

function Spreadsheet() {
  const rows = Array.from({ length: 12 }, (_, i) => `DOC1K010000000${String(i + 1).padStart(2, "0")}`);
  const num = "border-b border-r border-[#c6c6c6] bg-[#e6e6e6] p-0 text-center font-normal";
  const cell = "overflow-hidden border-b border-r border-[#e1e1e1] p-0 pl-[2px]";
  return (
    <section aria-label="Sample error file" className="mt-[27px] overflow-hidden bg-white pb-[8px]">
      <Ribbon />
      <div className="flex h-[42px] items-start bg-[#e6e6e6] pt-[10px] text-[11px] text-[#444]">
        <div className="flex h-[23px] w-[97px] items-center justify-between border border-[#d0d0d0] bg-white pl-[5px] pr-[6px]">A1<Caret /></div>
        <span className="w-[29px] pt-[2px] text-center text-[#999]">⋮</span>
        <div className="flex h-[23px] w-[106px] items-center justify-between border border-[#d0d0d0] bg-white px-[11px] text-[#b5b5b5]">
          <Ico className="size-[13px]" w={1.800}><path d="M2 2l12 12M14 2 2 14" /></Ico>
          <Ico className="size-[14px]" w={2.500}><path d="M1.500 9 6 13.500 14.500 3" /></Ico>
          <i className="font-serif text-[15px] text-[#555]">fx</i>
        </div>
        <input aria-label="Formula bar" defaultValue="InvoiceInternalID" className="ml-[2px] h-[23px] min-w-0 flex-1 border border-[#d0d0d0] bg-white pl-[10px]" />
        <Caret className="relative ml-[-14px] mr-[9px] mt-[10px]" />
      </div>
      <div className="flex h-[276px] bg-[#e6e6e6] font-[Lato,sans-serif] text-[15px] leading-[19px] text-[#1c1c1c]">
        <div className="relative min-w-0 flex-1 overflow-hidden">
          <table className="w-full table-fixed border-separate border-spacing-0 whitespace-nowrap bg-white">
            <colgroup><col className="w-[24px]" /><col className="w-[199px]" /><col className="w-[199px]" /><col className="w-[199px]" /><col className="w-[775px]" /><col /></colgroup>
            <thead>
              <tr className="h-[21px]">
                <th className={num} aria-label="Select all cells"><svg viewBox="0 0 14 14" className="ml-auto mr-[2px] size-[14px]"><path d="M14 0v14H0z" fill="#b2b2b2" /></svg></th>
                <th className="border-b border-r border-[#b5b5b5] bg-[#d2d2d2] p-0 font-normal text-[#217346]">A</th>
                {["B", "C", "D", "E"].map((c) => <th key={c} className={num}>{c}</th>)}
              </tr>
            </thead>
            <tbody>
              <tr className="h-[20px]">
                <th className="border-b border-r border-[#b5b5b5] bg-[#d2d2d2] p-0 font-normal text-[#217346]">1</th>
                <td className={cell}>InvoiceInternalID</td><td className={cell}>BatchSubmissionStatus</td><td className={cell}>BatchSubmissionGuid</td><td className={cell}>Error</td><td className={cell} />
              </tr>
              {rows.map((r, i) => (
                <tr key={r} className="h-[20px]">
                  <th className={num}>{i + 2}</th>
                  <td className={`text-[13px] ${cell}`}>{r}</td>
                  <td className="border-b border-r border-[#e1e1e1] p-0 pr-[2px] text-right">5</td>
                  <td className={`text-[13px] text-[#1f9a1f] ${cell}`}>a7e6676b-b036-41f4-9957-eace</td>
                  <td className={cell}>Failed to save to draft : Issuance date time value of the document is too old that cannot be submitted.</td>
                  <td className={cell} />
                </tr>
              ))}
            </tbody>
          </table>
          <div className="pointer-events-none absolute left-[23px] top-[20px] h-[22px] w-[201px] border-2 border-[#217346]">
            <span className="absolute -bottom-[4px] -right-[4px] size-[5px] border border-white bg-[#217346]" />
          </div>
        </div>
        <div className="w-[17px] pl-[2px] pr-[2px] pt-[2px]">
          <div className="flex h-[14px] items-center justify-center border border-[#c4c4c4] bg-white"><Caret className="rotate-180" /></div>
          <div className="mt-[2px] h-[138px] border border-[#c4c4c4] bg-white" />
        </div>
      </div>
    </section>
  );
}

/* ---------- floating tools ---------- */

function FloatingTools({ gap }: { gap: string }) {
  return (
    <div className={`flex flex-col gap-[20px] ${gap}`}>
      <button aria-label="Apps" className="ml-[2px] flex size-[72px] items-center justify-center rounded-full bg-[#131318]">
        <svg viewBox="0 0 34 34" className="size-[34px]" fill="none" stroke="#929299" strokeWidth="2.600">
          <path d="M2.300 5.300h10v10h-10zM2.300 22.300h10v10h-10zM19.300 22.300h10v10h-10z" strokeLinejoin="round" />
          <path d="M25 0c1.300 5.300 2.800 6.900 8.300 8.300C27.800 9.700 26.300 11.300 25 16.600c-1.300-5.300-2.800-6.900-8.300-8.300C22.200 6.900 23.700 5.300 25 0z" fill="#929299" stroke="none" />
        </svg>
      </button>
      <div className="flex h-[72px] w-[82px] items-center rounded-l-[36px] bg-[#131318] pl-[10px]">
        <button aria-label="Translate" className="flex size-[56px] items-center justify-center rounded-full bg-[#a8516e]">
          <svg viewBox="0 0 34 34" className="size-[34px]" fill="none" stroke="#c4bcc2" strokeWidth="2.800">
            <path d="M2 6.500h14v8H2zM9 1.500v19" />
            <path d="M20.500 4h4.500a6 6 0 0 1 6 6v2.500M3.500 23.500v2.500a5.500 5.500 0 0 0 5.500 5.500h4.500" />
            <path d="M17.500 33l6.500-17h1.500L32.500 33M20 27.500h10" />
          </svg>
        </button>
      </div>
    </div>
  );
}

/* ---------- page ---------- */

export default function App() {
  return (
    <div className="flex overflow-hidden bg-[#05071a] font-['Open_Sans','Noto_Sans',sans-serif]">
      <div className="w-[102px] shrink-0 border-r-2 border-[#131526]" />
      <main className="min-w-0 flex-1 pb-[71px] pl-[112px] pr-[30px]">
        <article className="bg-[#05071a] px-[40px] pb-[40px] pt-[26px] text-[#d6d6d6] shadow-[0_8px_40px_rgb(34,62,96)]">
          <Portal
            s={large}
            initials="FB"
            label="Batch upload result"
            table={<BatchTable />}
          >
            <div className="absolute inset-0 z-20 bg-black/40">
              <div className="absolute bottom-[2px] left-[258px] h-[8px] w-[98px] bg-[#dedede]" />
              <div className="absolute bottom-0 left-[370px] h-[9px] w-[94px] bg-[#dedede]" />
              <div className="absolute bottom-0 left-[505px] h-[8px] w-[477px] bg-[#dedede]" />
              <BatchDialog />
            </div>
          </Portal>
          <ul className="mt-[29px] list-disc pl-[80px] font-['Noto_Sans',sans-serif] text-[26px] leading-[37px]">
            <li>Review and correct the errors presented in the downloaded file, and re-upload these documents in a new.</li>
            <li>Below is the sample error file.</li>
          </ul>
          <Spreadsheet />
          <h2 className="mt-[45px] text-[37px] font-extrabold leading-[44px]">Step 4: View Submitted Drafts</h2>
          <ul className="mb-[27px] mt-[42px] list-disc pl-[80px] font-['Noto_Sans',sans-serif] text-[26px] leading-[37px]">
            <li>You will see your drafts in <strong>Draft Grid</strong> view.</li>
          </ul>
          <Portal s={small} initials="D" drafts label="Draft grid" table={<DraftsTable />} />
        </article>
      </main>
      <div className="w-[84px] shrink-0">
        <FloatingTools gap="mt-[304px]" />
        <FloatingTools gap="mt-[487px]" />
        <FloatingTools gap="mt-[671px]" />
      </div>
    </div>
  );
}
